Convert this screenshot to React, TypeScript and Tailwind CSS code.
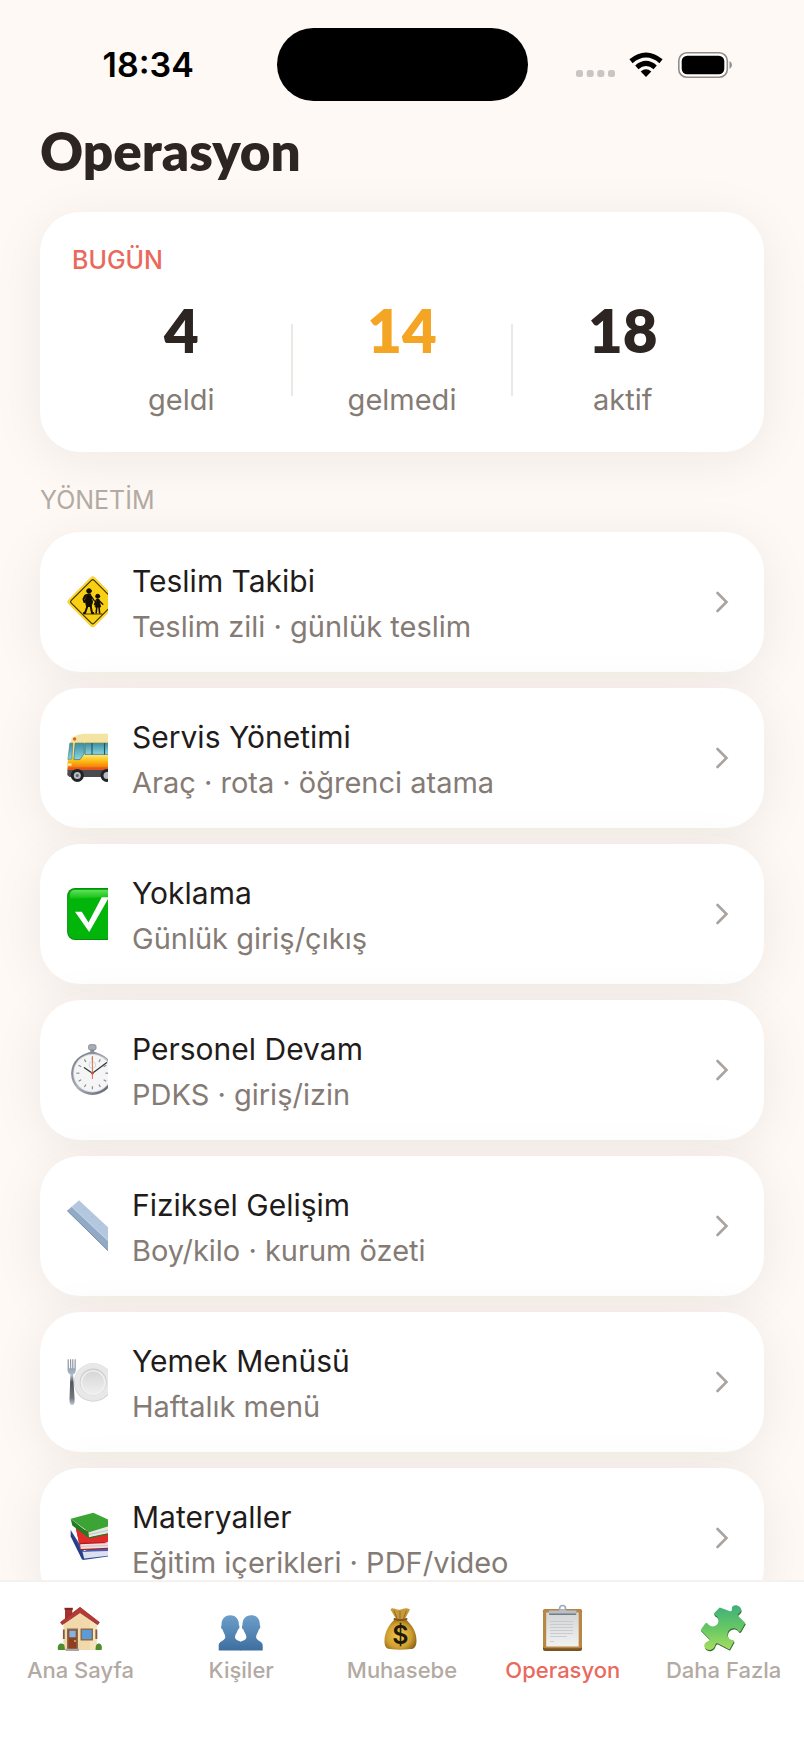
import type { ReactNode } from "react";

function CrossingIcon() {
  return (
    <svg viewBox="0 0 52 52" className="size-[52px]" aria-hidden="true">
      <rect x="7" y="7" width="37.5" height="37.5" rx="3" transform="rotate(45 25.75 25.75)" fill="#f3cf4e" />
      <rect x="7.8" y="7.8" width="35.9" height="35.9" rx="2.5" transform="rotate(45 25.75 25.75)" fill="#ffda1f" />
      <rect x="9.6" y="9.6" width="32.300" height="32.300" rx="2" transform="rotate(45 25.75 25.75)" fill="#f9cf14" stroke="#3b2d05" strokeWidth="1.100" />
      <g fill="#120d02" stroke="#120d02" strokeLinecap="round" strokeLinejoin="round">
        <circle cx="22" cy="15" r="2.3" />
        <path d="M19.5 18.5l4-.5 2 8-1.5 4.500h-4.500l-1-5z" strokeWidth="1" />
        <path d="M18.3 19.500l-1.800 3.500.8 3" strokeWidth="2" fill="none" />
        <path d="M24.500 20.500l3 4.500" strokeWidth="1.300" fill="none" />
        <path d="M20.500 30l-2.500 7h-1M23.500 29l1.500 8h1.200" strokeWidth="2" fill="none" />
        <circle cx="30.700" cy="20.300" r="2" />
        <path d="M29.500 23.500h2.600l1.400 7.500h-5z" strokeWidth="1" />
        <path d="M32.500 25l3.300 3.200M29 25l-1.600 3.500" strokeWidth="1.300" fill="none" />
        <path d="M29.800 31l-.6 6M32 31l.6 6" strokeWidth="1.600" fill="none" />
        <path d="M17 38h18" strokeWidth=".8" />
      </g>
    </svg>
  );
}

function BusIcon() {
  return (
    <svg viewBox="0 0 52 52" className="size-[52px]" aria-hidden="true">
      <defs>
        <linearGradient id="busBody" x1="0" y1="0" x2="0" y2="1">
          <stop offset="0" stopColor="#fbe36c" />
          <stop offset=".35" stopColor="#fdbf12" />
          <stop offset=".7" stopColor="#f8860f" />
          <stop offset="1" stopColor="#de4413" />
        </linearGradient>
        <linearGradient id="busGlass" x1="0" y1="0" x2="0" y2="1">
          <stop offset="0" stopColor="#3c8fa3" />
          <stop offset="1" stopColor="#8bd5e0" />
        </linearGradient>
      </defs>
      <path d="M5 5.5Q11 2 17 1.8H52V11H3.5z" fill="#f4e4a4" />
      <path d="M3.3 9.8H52V24H1.5z" fill="#f7dd83" />
      <path d="M1.8 23.5H52V39H.6V31z" fill="url(#busBody)" />
      <path d="M.6 37.500H52V45H2.500L.3 43z" fill="#4a4b50" />
      <path d="M.8 35.500H52v2.500H.8z" fill="#e2561c" />
      <path d="M2.8 11.2h3L4.9 27l-4 .5z" fill="url(#busGlass)" stroke="#39727e" strokeWidth=".5" />
      <path d="M8.2 11.2h9v10.4L13 27.6H6.900z" fill="url(#busGlass)" stroke="#39727e" strokeWidth=".7" />
      <path d="M18 11.2H52v11.2H18z" fill="url(#busGlass)" stroke="#39727e" strokeWidth=".7" />
      <path d="M25 11v11.5M37.5 11v11.5" stroke="#25505a" strokeWidth="1.1" />
      <circle cx="7.6" cy="7" r="1.7" fill="#d9661f" />
      <path d="M1 31.5h3.5v2.2H.8z" fill="#fff1b0" />
      <circle cx="10.3" cy="43.4" r="6.5" fill="#222327" />
      <circle cx="10.3" cy="43.4" r="3.5" fill="#b8bbc1" />
      <circle cx="10.3" cy="43.4" r="1.5" fill="#62656b" />
      <circle cx="40" cy="43.4" r="6.5" fill="#222327" />
      <circle cx="40" cy="43.4" r="3.5" fill="#b8bbc1" />
    </svg>
  );
}

function CheckIcon() {
  return (
    <svg viewBox="0 0 52 52" className="size-[52px]" aria-hidden="true">
      <defs>
        <linearGradient id="checkTop" x1="0" y1="0" x2="0" y2="1">
          <stop offset="0" stopColor="#5fe05a" />
          <stop offset="1" stopColor="#0dbf0b" />
        </linearGradient>
      </defs>
      <rect x=".1" y="0" width="51.800" height="52" rx="8" fill="#0b8a12" />
      <rect x="1.1" y="1" width="49.800" height="50" rx="7.2" fill="#02b50a" />
      <path d="M8 2h36q5 0 5 5v2q-22 1-46 2V7q0-5 5-5z" fill="url(#checkTop)" />
      <path d="M8 23.7h6.8l6.7 10.8L34.7 9.3H42L22.2 44z" fill="#fff" />
    </svg>
  );
}

function StopwatchIcon() {
  const ticks = [0, 30, 60, 90, 120, 150, 180, 210, 240, 270, 300, 330];
  return (
    <svg viewBox="0 0 52 52" className="size-[52px]" aria-hidden="true">
      <defs>
        <linearGradient id="watchRim" x1="0" y1="0" x2="1" y2="1">
          <stop offset="0" stopColor="#6c727b" />
          <stop offset=".5" stopColor="#a9afb8" />
          <stop offset="1" stopColor="#4a5160" />
        </linearGradient>
      </defs>
      <rect x="23.3" y="4" width="4" height="6" fill="#8d939b" />
      <rect x="21.5" y=".6" width="7.6" height="5.4" rx="1.8" fill="#a7adb4" stroke="#6d747d" strokeWidth=".6" />
      <path d="M19.5 10q5.8-3 11.6 0" fill="none" stroke="#7c838c" strokeWidth="1.5" />
      <circle cx="25.4" cy="29.6" r="21.3" fill="url(#watchRim)" />
      <circle cx="25.4" cy="29.2" r="19.2" fill="#d9dce0" />
      <circle cx="25.4" cy="29.2" r="18.3" fill="#f5f5f6" />
      {ticks.map((a) => (
        <path key={a} d="M25.4 13.2v3" stroke="#8a8d93" strokeWidth="1.2" transform={`rotate(${a} 25.4 29.2)`} />
      ))}
      <circle cx="25.4" cy="21" r="3.3" fill="none" stroke="#c6c8cc" strokeWidth=".7" />
      <path d="M25.4 29.2L39.5 18.7M25.4 29.2l-8-5.5" stroke="#33363c" strokeWidth="1.3" strokeLinecap="round" />
      <path d="M25.4 35V12" stroke="#e0714b" strokeWidth="1" />
      <circle cx="25.4" cy="29.2" r="1.4" fill="#c8583c" />
    </svg>
  );
}

function RulerIcon() {
  return (
    <svg viewBox="0 0 52 52" className="size-[52px]" aria-hidden="true">
      <path d="M.3 10.7L12 .2 52 37.5 52 61.5z" fill="#b3c8de" />
      <path d="M.3 10.7L4.8 6.7 52 51v10.500z" fill="#93aac6" />
      <path d="M4.8 6.7L52 51" stroke="#cfdeed" strokeWidth=".8" />
      <path d="M.3 10.7L52 61.5" stroke="#7990ad" strokeWidth="1" />
      <path d="M18 8.7l-1.200 1.200M26 16.2l-1.200 1.200M34 23.6l-1.200 1.200" stroke="#9db4cd" strokeWidth=".8" />
    </svg>
  );
}

function PlateIcon() {
  return (
    <svg viewBox="0 0 52 52" className="size-[52px]" aria-hidden="true">
      <defs>
        <linearGradient id="forkMetal" x1="0" y1="0" x2="0" y2="1">
          <stop offset="0" stopColor="#85878b" />
          <stop offset=".35" stopColor="#a9bdd0" />
          <stop offset=".5" stopColor="#53565b" />
          <stop offset=".85" stopColor="#77797c" />
          <stop offset="1" stopColor="#b5cbdc" />
        </linearGradient>
        <linearGradient id="plateFace" x1="0" y1="0" x2="0" y2="1">
          <stop offset="0" stopColor="#d7d7d7" />
          <stop offset="1" stopColor="#eeeeee" />
        </linearGradient>
      </defs>
      <circle cx="26.2" cy="26.5" r="19.3" fill="#d3d5d6" />
      <circle cx="26.2" cy="26" r="18.7" fill="#e8e8e8" />
      <circle cx="26.2" cy="26" r="13.5" fill="#cdcdcd" />
      <circle cx="26.2" cy="26.7" r="12.7" fill="#efefef" />
      <circle cx="26.2" cy="26.3" r="10.8" fill="url(#plateFace)" />
      <path d="M.7 3.3h1l.3 9h.9l.2-9h1l.2 9h.8l.2-9h1l.2 9h.9l.3-9h1l.1 10.5q0 3.5-2.700 4.800l1.500 24.400q.3 6-2.500 6t-2.600-6L3.400 18.600Q.5 17.300.5 13.800z" fill="url(#forkMetal)" />
    </svg>
  );
}

function BooksIcon() {
  return (
    <svg viewBox="0 0 52 52" className="size-[52px]" aria-hidden="true">
      <path d="M3.7 18l12.6 30L52 43v-3l-35-1z" fill="#31509b" />
      <path d="M3.7 18v6.5L15 47.6l1.600.2-1-5z" fill="#263c86" />
      <path d="M15.5 39.8L52 37v5.600l-34.800 3.800z" fill="#dbe1ef" />
      <path d="M15.5 39.8l10-4.300H52v3z" fill="#4160b0" />
      <path d="M8.7 15.5l5 22.700L52 36v-2l-30-8z" fill="#b41920" />
      <path d="M8.7 15.5L12 31l40-1.500V23l-30-4z" fill="#e02b2b" />
      <path d="M13.2 32.2L52 30.5v4.700l-38.300 1.800z" fill="#efdfe0" />
      <path d="M13.3 34.5L52 33" stroke="#c9a9ab" strokeWidth=".6" />
      <path d="M3.7 6.8l18 14.200.3 5.300L5.300 13.500z" fill="#1f7c20" />
      <path d="M21.5 19.7L52 12.5v6.800l-30 6.200z" fill="#e3e8e3" />
      <path d="M22 22.5L52 16" stroke="#b0bdb0" strokeWidth=".7" />
      <path d="M3.7 6.8L26.3.7 50 11.800l-28 8.400z" fill="#3ba435" />
      <path d="M22 25.8L52 19.5" stroke="#247b25" strokeWidth="1.3" />
    </svg>
  );
}

function HouseIcon() {
  return (
    <svg viewBox="0 0 44 44" className="size-11 overflow-visible" aria-hidden="true">
      <path d="M7 1.3h7.300V13H7z" fill="#a2332f" />
      <path d="M6.5.8h8.300v2H6.500z" fill="#7f2524" />
      <path d="M5.5 15.5L22 3l16.700 12.500V43H5.500z" fill="#f1d9ab" />
      <path d="M32 11l6.700 5v27H32z" fill="#f6e3bc" />
      <path d="M22 .3L41.300 15.300l-1.600 2.400L22 5.600 4.200 17.700l-1.700-2.400z" fill="#b93734" stroke="#862927" strokeWidth=".7" />
      <path d="M4.900 22.500h1.800V32H4.900zM37.400 22.500h1.900V32h-1.900z" fill="#86593e" />
      <rect x="9" y="21.5" width="11" height="20.5" fill="#8b6b4b" />
      <rect x="10.500" y="23" width="8" height="19" fill="#8e3e23" />
      <rect x="11.300" y="23.600" width="6.400" height="6.700" fill="#83b4df" />
      <circle cx="17" cy="34" r=".9" fill="#ecc45b" />
      <rect x="22.5" y="21.5" width="12.500" height="12" fill="#8b6b4b" />
      <rect x="24" y="23" width="9.500" height="9" fill="#5b9cd8" />
      <path d="M0 43q-1.200-5 2.300-6.500 4-.7 4.300 3l.4 3.500zM37.500 43l.3-3.500q.6-3.500 3.800-3 3.200 1.500 2 6.500z" fill="#4f8d2c" />
      <path d="M7.500 41.700h13.500V44H7.500z" fill="#aaa6a5" />
    </svg>
  );
}

function PeopleIcon() {
  return (
    <svg viewBox="0 0 44 44" className="size-11 overflow-visible" aria-hidden="true">
      <defs>
        <linearGradient id="peopleFill" gradientUnits="userSpaceOnUse" x1="0" y1="8" x2="0" y2="43">
          <stop offset="0" stopColor="#6d9fcb" />
          <stop offset="1" stopColor="#3e6f9f" />
        </linearGradient>
      </defs>
      <g fill="url(#peopleFill)">
        <path d="M11.200 8.200c6 0 9 4.500 8.700 10 1 .5.700 3.800-.9 4.400-.9 3.400-3 5-3 7.400 0 3.500 5.800 4.200 6 5V43.400H-.3v-5.200c0-4 6.600-4.400 6.600-8.200 0-2.400-1.900-4-2.700-7.400-1.600-.6-2-3.900-1-4.400-.3-5.500 2.600-10 8.600-10z" />
        <path d="M32.200 8.200c-6 0-9 4.500-8.700 10-1 .5-.7 3.800.9 4.400.9 3.400 3 5 3 7.400 0 3.500-5.800 4.200-6 5V43.400h22.300v-5.200c0-4-6.600-4.400-6.600-8.200 0-2.400 1.900-4 2.700-7.400 1.600-.6 2-3.900 1-4.400.3-5.500-2.600-10-8.600-10z" />
      </g>
    </svg>
  );
}

function MoneyIcon() {
  return (
    <svg viewBox="0 0 44 44" className="size-11 overflow-visible" aria-hidden="true">
      <defs>
        <radialGradient id="bagFill" cx=".45" cy=".55" r=".6">
          <stop offset="0" stopColor="#f2cb50" />
          <stop offset=".65" stopColor="#cf9f30" />
          <stop offset="1" stopColor="#8b6116" />
        </radialGradient>
      </defs>
      <path d="M10.500 2.500q1.500-2.200 4.500-.7 4 1.700 7.500.2 4-1.700 7.500.5l-5 9.500h-9z" fill="#c69a3c" />
      <path d="M17 11.500l-3-8M20 11.500V4M23.500 11.500l3-8" stroke="#946c22" strokeWidth="1" />
      <path d="M15.500 12h10C31 17 36.500 24 36.500 33.500c0 6.500-2.500 8.600-6 8.600-7 .8-14 .8-20.500 0-4-.3-5.500-3.100-5.500-8.100C4.500 24.500 9.500 16.500 15.500 12z" fill="url(#bagFill)" />
      <path d="M14.500 12q6 2 12 0" stroke="#805819" strokeWidth="2" fill="none" strokeLinecap="round" />
      <text x="20.500" y="37" textAnchor="middle" fontSize="25" fontWeight="600" fill="#21190a" className="font-['Inter',sans-serif]">$</text>
    </svg>
  );
}

function ClipboardIcon() {
  return (
    <svg viewBox="0 0 44 44" className="size-11 overflow-visible" aria-hidden="true">
      <defs>
        <linearGradient id="paperFill" x1="0" y1="0" x2="0" y2="1">
          <stop offset="0" stopColor="#d4d5d7" />
          <stop offset="1" stopColor="#f1f1f2" />
        </linearGradient>
      </defs>
      <rect x="2" y="2.3" width="39" height="41.700" rx="2" fill="#7c5421" />
      <rect x="2" y="2.3" width="39" height="39" rx="2" fill="#b98744" />
      <rect x="5.2" y="5.5" width="32.5" height="34" fill="url(#paperFill)" />
      <path d="M9 14.500h23M9 17.500h23M9 20.500h23M9 23.500h23M9 26.500h23M9 29.500h17M9 34.500h4" stroke="#c3c5c9" strokeWidth=".8" />
      <circle cx="21.600" cy="1.500" r="3" fill="none" stroke="#9daab7" strokeWidth="1.700" />
      <path d="M8 3.500h9.500q1.500 0 2.500-1.200h3.400q1 1.200 2.500 1.200h9.400V7q0 1-1 1H9Q8 8 8 7z" fill="#b8bec5" />
      <path d="M8 6.500h27.300V7q0 1-1 1H9Q8 8 8 7z" fill="#747c86" />
    </svg>
  );
}

const PIECE =
  "M17.7.5Q22.5 2.3 28 4.2C29.8 4.6 30.2 3 29.8 1.6 30-1.5 33-2.3 36-1.2 39.5.3 40 4 37.5 5.9 36 7 35 7.7 36.2 9L43.3 16 38.7 24C37.5 25.5 36.5 24.5 35.8 23 33 20.3 28.5 20.8 26.3 24.2 24.5 27.7 25.8 31.5 29.3 32.8 31 33.2 32.5 33 31.8 34.8L27.5 42.5 16 36.5C14 35.6 13.3 37 12.7 39.5 11 43 7.5 44 4.3 42 1.5 40 1.8 36.5 4.5 35 6.5 34 8.5 33.7 7 31.5L-1.4 23 3.2 16.5C4.3 15.3 5.5 16 6.500 17.500 9 20.3 13 20 15.5 17 17.500 13.5 16.500 10 13.5 8.600 12 8 11.5 7 12.5 5.800Z";

function PuzzleIcon() {
  return (
    <svg viewBox="0 0 44 44" className="size-11 overflow-visible" aria-hidden="true">
      <defs>
        <linearGradient id="pieceFill" x1="0" y1="0" x2="0" y2="1">
          <stop offset="0" stopColor="#3fb07c" />
          <stop offset=".5" stopColor="#66c765" />
          <stop offset="1" stopColor="#a6dd5e" />
        </linearGradient>
      </defs>
      <path d={PIECE} fill="#2f6b35" transform="translate(.5 1.3)" />
      <path d={PIECE} fill="url(#pieceFill)" />
    </svg>
  );
}

function StatusIcons() {
  return (
    <svg viewBox="0 0 158 28" className="h-7 w-[158px]" role="img" aria-label="Wi-Fi ve pil">
      <g fill="#c9c5c2">
        <rect x="1" y="19" width="7" height="7" rx="2.5" />
        <rect x="11.7" y="19" width="7" height="7" rx="2.5" />
        <rect x="22.3" y="19" width="7" height="7" rx="2.5" />
        <rect x="33" y="19" width="7" height="7" rx="2.5" />
      </g>
      <g fill="none" stroke="#000" strokeWidth="5">
        <path d="M56 10.2Q71 -2.2 86 10.2" />
        <path d="M61.8 16.3Q71 8.6 80.2 16.3" />
      </g>
      <path d="M71 26L65.7 20.5Q71 16 76.3 20.5z" />
      <rect x="103.8" y="1.800" width="48.5" height="24.400" rx="8" fill="#fff" stroke="#8f8c8a" strokeWidth="1.6" />
      <rect x="106.7" y="4.700" width="42.6" height="18.600" rx="5.500" />
      <path d="M154.500 10q2.500 1.300 2.500 4t-2.500 4z" fill="#8f8c8a" />
    </svg>
  );
}

function Stat({ value, label, accent }: { value: number; label: string; accent?: boolean }) {
  return (
    <div className="flex flex-1 flex-col items-center">
      <span
        className={`font-['Lato',sans-serif] text-[60px] leading-[72px] font-extrabold ${accent ? "text-[#f5a524]" : "text-[#2d2522]"}`}
      >
        {value}
      </span>
      <span className="mt-[14px] text-[29px] leading-10 text-[#857b75]">{label}</span>
    </div>
  );
}

const rows: { title: string; note: string; icon: ReactNode }[] = [
  { title: "Teslim Takibi", note: "Teslim zili · günlük teslim", icon: <CrossingIcon /> },
  { title: "Servis Yönetimi", note: "Araç · rota · öğrenci atama", icon: <BusIcon /> },
  { title: "Yoklama", note: "Günlük giriş/çıkış", icon: <CheckIcon /> },
  { title: "Personel Devam", note: "PDKS · giriş/izin", icon: <StopwatchIcon /> },
  { title: "Fiziksel Gelişim", note: "Boy/kilo · kurum özeti", icon: <RulerIcon /> },
  { title: "Yemek Menüsü", note: "Haftalık menü", icon: <PlateIcon /> },
  { title: "Materyaller", note: "Eğitim içerikleri · PDF/video", icon: <BooksIcon /> },
];

const tabs: { label: string; icon: ReactNode; active?: boolean }[] = [
  { label: "Ana Sayfa", icon: <HouseIcon /> },
  { label: "Kişiler", icon: <PeopleIcon /> },
  { label: "Muhasebe", icon: <MoneyIcon /> },
  { label: "Operasyon", icon: <ClipboardIcon />, active: true },
  { label: "Daha Fazla", icon: <PuzzleIcon /> },
];

export default function App() {
  return (
    <div className="flex h-screen flex-col overflow-hidden bg-[#fef9f5] font-['Inter',sans-serif]">
      <header className="grid shrink-0 grid-cols-[1fr_auto_1fr] items-center pt-7">
        <time className="justify-self-center pl-5 text-[34px] leading-10 font-semibold text-black">18:34</time>
        <div className="h-[73px] w-[251px] rounded-full bg-black" />
        <div className="justify-self-center pr-6">
          <StatusIcons />
        </div>
      </header>

      <main className="min-h-0 flex-1 overflow-y-auto px-10 [scrollbar-width:none]">
        <h1 className="pt-[18px] font-['Lato',sans-serif] text-[53px] leading-[64px] font-extrabold text-[#2d2522]">Operasyon</h1>

        <section className="mt-[29px] rounded-[40px] bg-white px-8 pt-8 pb-8 shadow-[0_8px_52px_rgba(60,35,20,0.07)]">
          <h2 className="text-[25px] leading-8 font-medium text-[#e96a5d]">BUGÜN</h2>
          <div className="mt-[18px] flex items-end">
            <Stat value={4} label="geldi" />
            <div className="mb-6 h-[72px] w-0.5 bg-[#ece8e4]" />
            <Stat value={14} label="gelmedi" accent />
            <div className="mb-6 h-[72px] w-0.5 bg-[#ece8e4]" />
            <Stat value={18} label="aktif" />
          </div>
        </section>

        <h2 className="mt-8 text-[25px] leading-8 text-[#b3aaa3]">YÖNETİM</h2>

        <ul className="mt-4 flex flex-col gap-4 pb-10">
          {rows.map((row) => (
            <li key={row.title}>
              <button
                type="button"
                className="flex w-full items-center gap-6 rounded-[40px] bg-white pr-[35px] pl-[27px] text-left shadow-[0_8px_52px_rgba(60,35,20,0.07)]"
              >
                <span className="flex w-[41px] shrink-0 overflow-hidden">
                  <span className="shrink-0">{row.icon}</span>
                </span>
                <span className="flex min-w-0 flex-1 flex-col pt-[26px] pb-[22px]">
                  <span className="text-[30px] leading-[46px] text-[#1f1c1b]">{row.title}</span>
                  <span className="text-[29px] leading-[46px] text-[#857b75]">{row.note}</span>
                </span>
                <svg viewBox="0 0 14 24" className="h-6 w-3.5 shrink-0" fill="none" stroke="#aaa39e" strokeWidth="2.6" aria-hidden="true">
                  <path d="M2.500 3L11.500 12 2.500 21" strokeLinecap="round" />
                </svg>
              </button>
            </li>
          ))}
        </ul>
      </main>

      <nav className="grid h-[168px] shrink-0 grid-cols-5 items-start border-t-2 border-[#f5f1ee] bg-white pt-[25px]">
        {tabs.map((tab) => (
          <a
            key={tab.label}
            href="#"
            aria-current={tab.active ? "page" : undefined}
            className={`flex flex-col items-center gap-[5px] text-[22px] leading-7 font-medium ${tab.active ? "text-[#e96a5d]" : "text-[#b3aaa3]"}`}
          >
            {tab.icon}
            {tab.label}
          </a>
        ))}
      </nav>
    </div>
  );
}
